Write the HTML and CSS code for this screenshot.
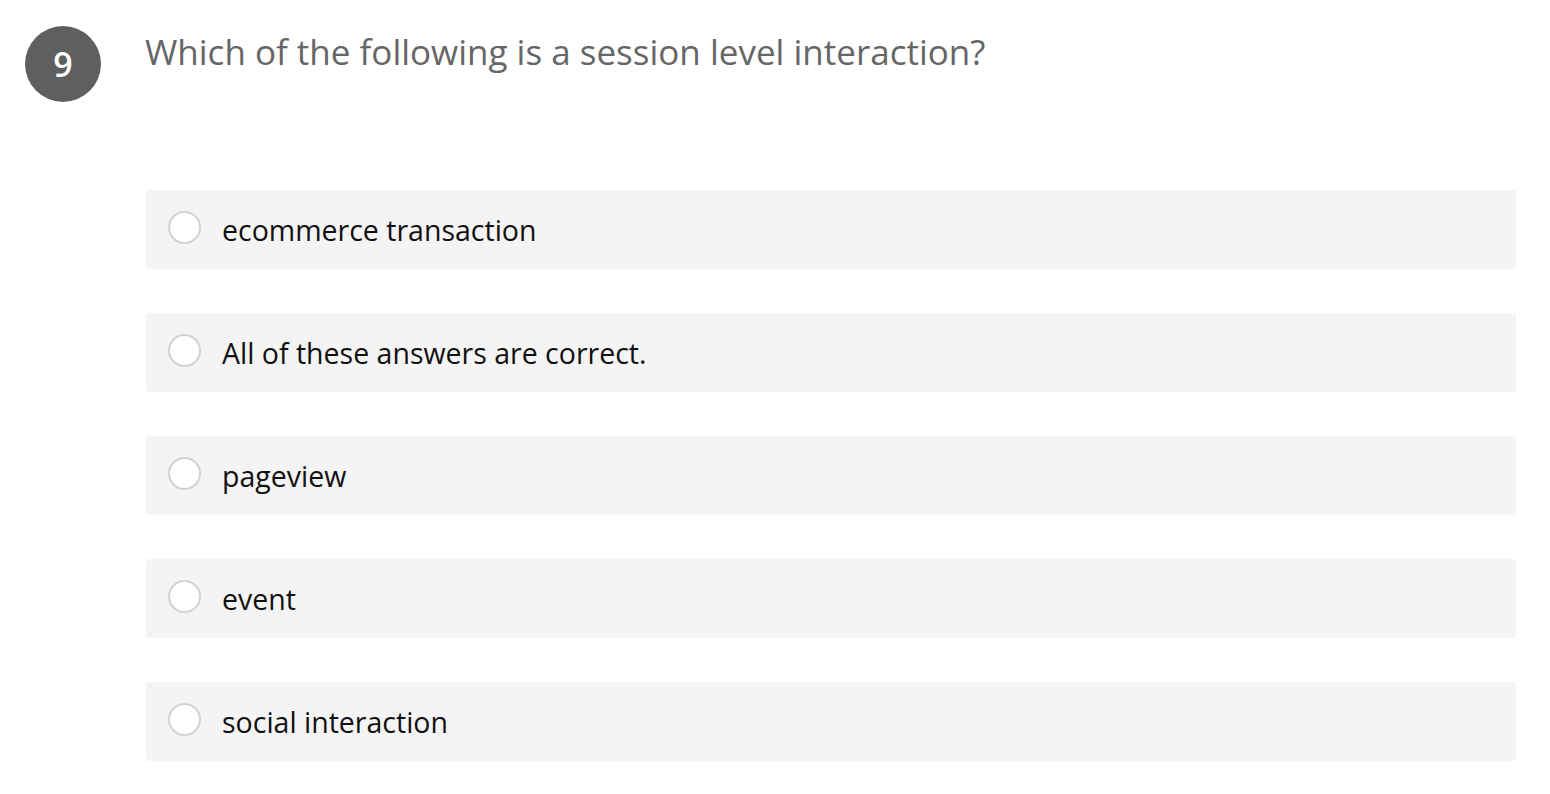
FILE: index.html
```html
<!DOCTYPE html>
<html>
<head>
<meta charset="utf-8">
<link rel="stylesheet" href="styles.css">
</head>
<body>
<div class="question">
  <div class="qhead">
    <div class="badge">9</div>
    <div class="qtext">Which of the following is a session level interaction?</div>
  </div>
  <ul class="options">
    <li class="option"><span class="radio"></span><span class="label">ecommerce transaction</span></li>
    <li class="option"><span class="radio"></span><span class="label">All of these answers are correct.</span></li>
    <li class="option"><span class="radio"></span><span class="label">pageview</span></li>
    <li class="option"><span class="radio"></span><span class="label">event</span></li>
    <li class="option"><span class="radio"></span><span class="label">social interaction</span></li>
  </ul>
</div>
</body>
</html>
```

FILE: styles.css
```css
html, body {
  margin: 0;
  padding: 0;
  background: #ffffff;
  font-family: "Open Sans", "Noto Sans", sans-serif;
}
.question {
  padding: 26px 34px 0 25px;
}
.qhead {
  display: flex;
  align-items: flex-start;
  gap: 44px;
}
.badge {
  width: 76px;
  height: 76px;
  border-radius: 50%;
  background: #5f5f5f;
  color: #fff;
  font-size: 34px;
  font-weight: 600;
  display: flex;
  align-items: center;
  justify-content: center;
  flex: none;
}
.qtext {
  color: #666;
  font-size: 35px;
  line-height: 52px;
  margin-top: 0;
}
.options {
  list-style: none;
  margin: 88px 0 0 121px;
  padding: 0;
  display: flex;
  flex-direction: column;
  gap: 44px;
}
.option {
  height: 79px;
  background: #f4f4f4;
  border-radius: 3px;
  display: flex;
  align-items: center;
  padding-left: 22px;
}
.radio {
  width: 33px;
  height: 33px;
  border: 2px solid #d2d2d2;
  border-radius: 50%;
  box-sizing: border-box;
  flex: none;
  background: #fff;
  margin-top: -4px;
}
.label {
  margin-left: 21px;
  font-size: 28.5px;
  color: #111;
}
```
